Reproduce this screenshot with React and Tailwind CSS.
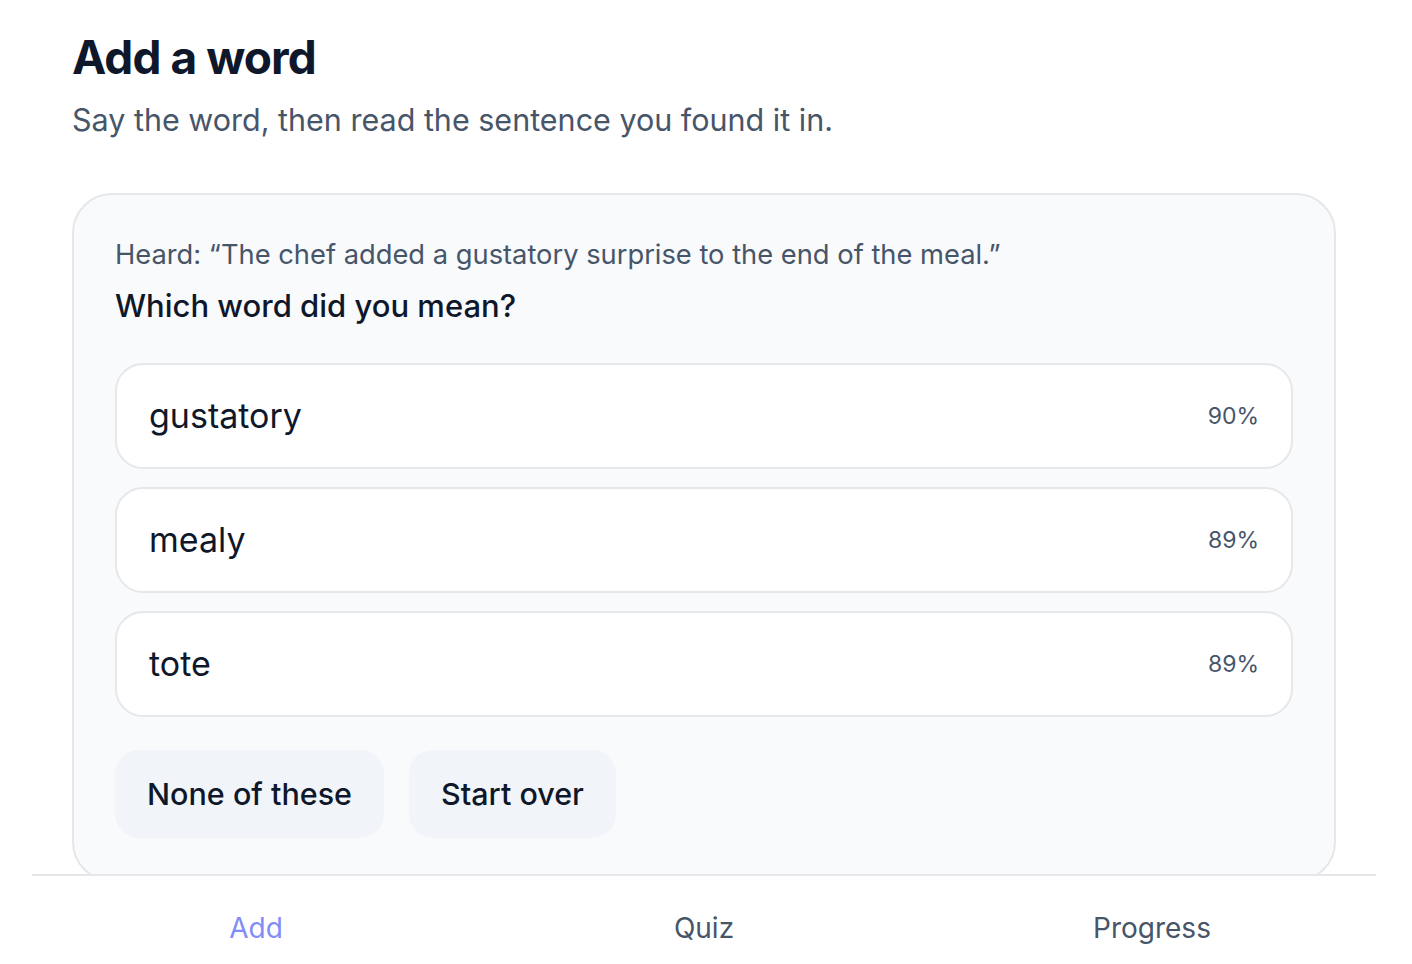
const options = [
  { word: 'gustatory', score: '90%' },
  { word: 'mealy', score: '89%' },
  { word: 'tote', score: '89%' },
]

const tabs = [
  { label: 'Add', active: true },
  { label: 'Quiz', active: false },
  { label: 'Progress', active: false },
]

export default function App() {
  return (
    <div
      className="min-h-[964px] bg-white text-[#0f172a]"
      style={{ fontFamily: 'Inter, "Noto Sans", sans-serif' }}
    >
      <div className="pl-[72px] pr-[76px] pt-[30px] pb-[120px]">
        {/* Header */}
        <h1 className="text-[46px] leading-[54px] font-bold tracking-[-0.02em] text-[#0f172a]">Add a word</h1>
        <p className="mt-[16px] text-[30.5px] leading-[40px] text-[#475569]">
          Say the word, then read the sentence you found it in.
        </p>

        {/* Candidate card */}
        <div className="mt-[53px] rounded-[40px] border-2 border-[#e5e7eb] bg-[#f8fafc] px-[41px] pt-[42px] pb-[42px]">
          <p className="text-[27.3px] leading-[36px] text-[#475569]">
            Heard: “The chef added a gustatory surprise to the end of the meal.”
          </p>
          <p className="mt-[13px] text-[31px] leading-[40px] font-medium text-[#0f172a]">Which word did you mean?</p>

          <div className="mt-[37px] flex flex-col gap-[18px]">
            {options.map((o) => (
              <button
                key={o.word}
                className="flex h-[106px] items-center justify-between rounded-[28px] border-2 border-[#e5e7eb] bg-white px-[32px] text-left"
              >
                <span className="text-[34px] leading-[44px] text-[#0f172a]">{o.word}</span>
                <span className="text-[23px] leading-[28px] text-[#475569]">{o.score}</span>
              </button>
            ))}
          </div>

          <div className="mt-[33px] flex gap-[25px]">
            <button className="h-[88px] rounded-[24px] bg-[#f1f5f9] px-[32px] text-[30.5px] font-medium text-[#0f172a]">
              None of these
            </button>
            <button className="h-[88px] rounded-[24px] bg-[#f1f5f9] px-[32px] text-[30.5px] font-medium text-[#0f172a]">
              Start over
            </button>
          </div>
        </div>
      </div>

      {/* Bottom nav */}
      <nav className="fixed bottom-0 left-[32px] right-[36px] grid h-[90px] grid-cols-3 border-t-2 border-[#e5e7eb] bg-white pt-[16px]">
        {tabs.map((t) => (
          <button
            key={t.label}
            className={`flex items-center justify-center text-[28px] ${t.active ? 'text-[#818cf8]' : 'text-[#475569]'}`}
          >
            {t.label}
          </button>
        ))}
      </nav>
    </div>
  )
}
